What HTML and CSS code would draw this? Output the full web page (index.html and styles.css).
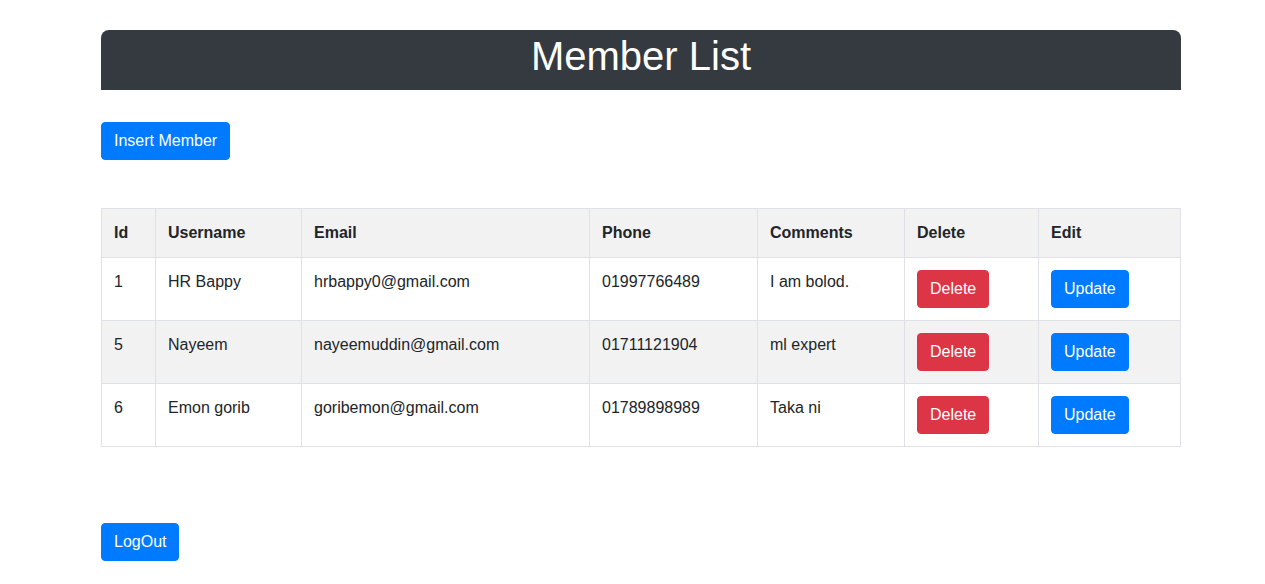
FILE: index.html
```html
<!DOCTYPE html>
<html>
<head>
<meta charset="utf-8">
<link rel="stylesheet" href="styles.css">
</head>
<body>
<div class="page">
  <div class="banner"><h1 class="title">Member List</h1></div>
  <div class="actions"><a class="btn btn-primary">Insert Member</a></div>
  <table class="members">
    <colgroup>
      <col class="c-id"><col class="c-user"><col class="c-email"><col class="c-phone"><col class="c-comments"><col class="c-delete"><col class="c-edit">
    </colgroup>
    <tbody>
      <tr class="head"><th>Id</th><th>Username</th><th>Email</th><th>Phone</th><th>Comments</th><th>Delete</th><th>Edit</th></tr>
      <tr><td>1</td><td>HR Bappy</td><td>hrbappy0@gmail.com</td><td>01997766489</td><td>I am bolod.</td><td><a class="btn btn-danger">Delete</a></td><td><a class="btn btn-primary">Update</a></td></tr>
      <tr class="striped"><td>5</td><td>Nayeem</td><td>nayeemuddin@gmail.com</td><td>01711121904</td><td>ml expert</td><td><a class="btn btn-danger">Delete</a></td><td><a class="btn btn-primary">Update</a></td></tr>
      <tr><td>6</td><td>Emon gorib</td><td>goribemon@gmail.com</td><td>01789898989</td><td>Taka ni</td><td><a class="btn btn-danger">Delete</a></td><td><a class="btn btn-primary">Update</a></td></tr>
    </tbody>
  </table>
  <div class="footer-actions"><a class="btn btn-primary">LogOut</a></div>
</div>
</body>
</html>
```

FILE: styles.css
```css
html, body {
  margin: 0;
  padding: 0;
  background: #fff;
}
body {
  font-family: "Liberation Sans", Arial, sans-serif;
  font-size: 16px;
  line-height: 1.5;
  color: #212529;
}
.page {
  width: 1080px;
  margin-left: 101px;
  padding-top: 30px;
}
.banner {
  background: #343a40;
  height: 60px;
  box-sizing: border-box;
  padding-bottom: 8px;
  border-radius: 8px 8px 0 0;
  display: flex;
  align-items: center;
  justify-content: center;
}
.title {
  margin: 0;
  color: #fff;
  font-weight: 400;
  font-size: 40px;
  line-height: 48px;
}
.actions {
  margin-top: 32px;
  margin-bottom: 48px;
}
.btn {
  display: inline-block;
  box-sizing: border-box;
  height: 38px;
  padding: 6px 12px;
  font-size: 16px;
  line-height: 24px;
  border: 1px solid transparent;
  border-radius: 4px;
  color: #fff;
  text-decoration: none;
  cursor: pointer;
  vertical-align: top;
}
.btn-primary { background: #007bff; border-color: #007bff; }
.btn-danger { background: #dc3545; border-color: #dc3545; }
.members {
  width: 1079px;
  border-collapse: collapse;
  table-layout: fixed;
}
.c-id { width: 54px; }
.c-user { width: 146px; }
.c-email { width: 288px; }
.c-phone { width: 168px; }
.c-comments { width: 147px; }
.c-delete { width: 134px; }
.c-edit { width: 142px; }
.members th, .members td {
  border: 1px solid #dee2e6;
  padding: 12px;
  text-align: left;
  vertical-align: top;
  line-height: 24px;
}
.members th { font-weight: 700; }
.members tr.head, .members tr.striped { background: #f2f2f2; }
.footer-actions {
  margin-top: 76px;
}
```
